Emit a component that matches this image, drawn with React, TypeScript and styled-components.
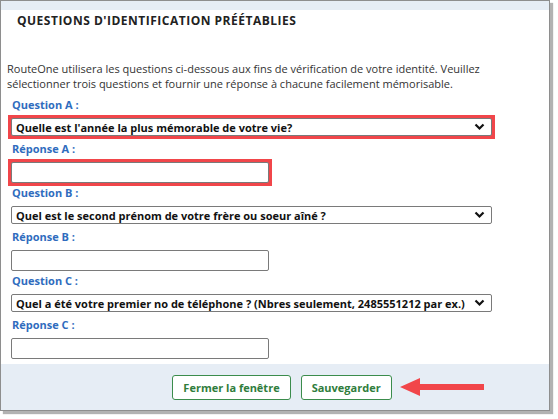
import styled, { createGlobalStyle } from "styled-components";

const GlobalStyle = createGlobalStyle`
    body {
        margin: 0;
        background: #ffffff;
        font-family: "Open Sans", "Liberation Sans", sans-serif;
    }
`;

interface Question {
    letter: string;
    text: string;
    highlight: boolean;
}

const questions: Question[] = [
    { letter: "A", text: "Quelle est l'année la plus mémorable de votre vie?", highlight: true },
    { letter: "B", text: "Quel est le second prénom de votre frère ou soeur aîné ?", highlight: false },
    {
        letter: "C",
        text: "Quel a été votre premier no de téléphone ? (Nbres seulement, 2485551212 par ex.)",
        highlight: false,
    },
];

const Chevron = () => (
    <svg width="11" height="8" viewBox="0 0 11 8">
        <path d="M1.5 1.5L5.5 5.5L9.5 1.5" fill="none" stroke="#111" strokeWidth={2.2} />
    </svg>
);

const App = () => {
    return (
        <>
            <GlobalStyle />
            <Page>
                <Panel>
                    <HeaderStrip />
                    <Body>
                        <Title>QUESTIONS D'IDENTIFICATION PRÉÉTABLIES</Title>
                        <Intro>
                            RouteOne utilisera les questions ci-dessous aux fins de vérification de votre identité. Veuillez
                            sélectionner trois questions et fournir une réponse à chacune facilement mémorisable.
                        </Intro>
                        {questions.map((q) => (
                            <Group key={q.letter}>
                                <Label>Question {q.letter} :</Label>
                                <Highlight active={q.highlight} gapBelow={3}>
                                    <Select>
                                        <span>{q.text}</span>
                                        <Chevron />
                                    </Select>
                                </Highlight>
                                <Label>Réponse {q.letter} :</Label>
                                <Highlight active={q.highlight} gapBelow={0}>
                                    <Input />
                                </Highlight>
                            </Group>
                        ))}
                    </Body>
                    <Footer>
                        <Button>Fermer la fenêtre</Button>
                        <Button>Sauvegarder</Button>
                        <Arrow width="86" height="20" viewBox="0 0 86 20">
                            <path d="M0 10L20 1V7H84V13H20V19Z" fill="#f1464a" />
                        </Arrow>
                    </Footer>
                </Panel>
            </Page>
        </>
    );
};

export default App;

const Page = styled.div`
    width: 558px;
    height: 419px;
    overflow: hidden;
`;

const Panel = styled.div`
    position: relative;
    width: 548px;
    height: 409px;
    border: 1px solid #8e8e8e;
    box-shadow: 3px 3px 1px rgba(0, 0, 0, 0.3);
    background: #fff;
    display: flex;
    flex-direction: column;
`;

const HeaderStrip = styled.div`
    height: 9px;
    background: #e6edf5;
`;

const Body = styled.div`
    flex: 1;
    padding: 0 0 0 6px;
`;

const Title = styled.div`
    font-size: 12px;
    font-weight: 700;
    color: #222;
    letter-spacing: 0.5px;
    line-height: 16px;
    padding: 3px 0 0 10px;
    height: 48px;
`;

const Intro = styled.p`
    margin: 0 0 7px;
    font-size: 11px;
    line-height: 15px;
    color: #333;
    width: 520px;
    height: 30px;
`;

const Group = styled.div`
    display: flex;
    flex-direction: column;
`;

const Label = styled.div`
    font-size: 11px;
    font-weight: 700;
    color: #2f6cbe;
    line-height: 14px;
    height: 14px;
    padding-left: 5px;
    margin-bottom: 3px;
`;

const Highlight = styled.div<{ active: boolean; gapBelow: number }>`
    align-self: flex-start;
    padding: 3px;
    margin: 0 0 ${(p) => p.gapBelow}px 1px;
    background: ${(p) => (p.active ? "#f1464a" : "transparent")};
`;

const Select = styled.div`
    width: 469px;
    height: 16px;
    border: 1px solid #7a7a7a;
    border-radius: 2px;
    background: #fff;
    display: flex;
    align-items: center;
    justify-content: space-between;
    padding: 0 6px 0 4px;
    font-size: 11px;
    font-weight: 700;
    color: #111;
`;

const Input = styled.div`
    width: 256px;
    height: 19px;
    border: 1px solid #7a7a7a;
    border-radius: 2px;
    background: #fff;
`;

const Footer = styled.div`
    height: 46px;
    background: #e6edf5;
    display: flex;
    align-items: center;
    justify-content: center;
    gap: 10px;
    padding-left: 14px;
    position: relative;
`;

const Button = styled.button`
    height: 25px;
    padding: 0 10px;
    border: 1px solid #3b8c4c;
    border-radius: 3px;
    background: #fff;
    color: #2f7d3c;
    font-family: "Open Sans", "Liberation Sans", sans-serif;
    font-size: 11px;
    font-weight: 700;
`;

const Arrow = styled.svg`
    position: absolute;
    left: 399px;
    top: 13px;
`;
